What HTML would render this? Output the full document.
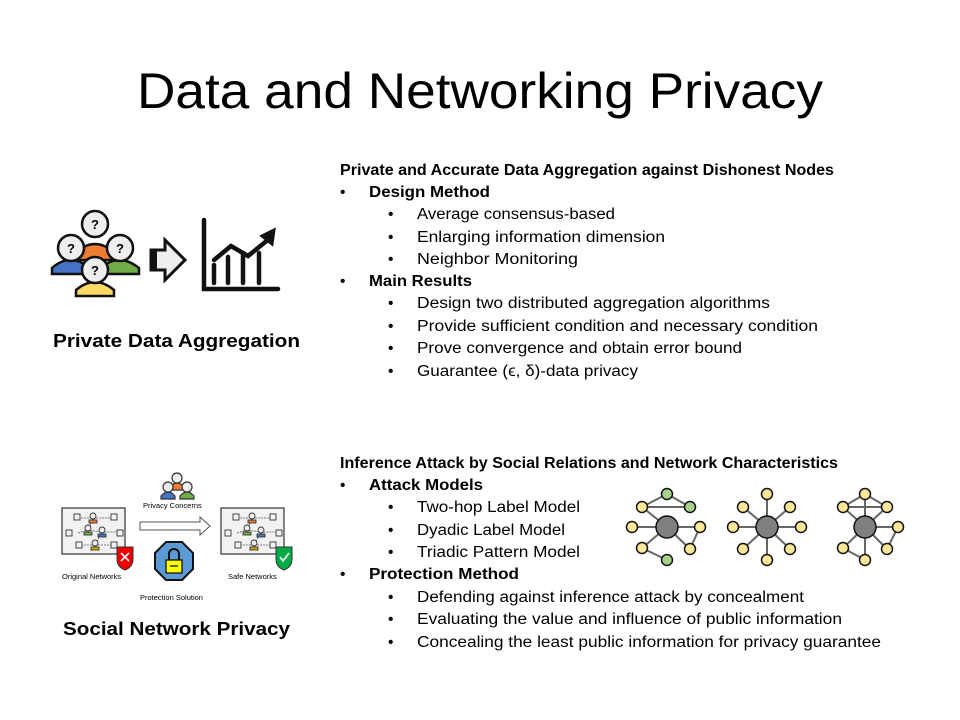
<!DOCTYPE html>
<html><head><meta charset="utf-8"><style>
html,body{margin:0;padding:0;background:#fff;}
svg{display:block}
text{font-family:"Liberation Sans","DejaVu Sans",sans-serif;fill:#000}
.b{font-weight:bold}
</style></head><body>
<svg width="960" height="720" viewBox="0 0 960 720" xmlns="http://www.w3.org/2000/svg">
<text x="137" y="108" font-size="50" textLength="686" lengthAdjust="spacingAndGlyphs">Data and Networking Privacy</text>

<g font-size="15.5">
<text class="b" x="340" y="175" textLength="494" lengthAdjust="spacingAndGlyphs">Private and Accurate Data Aggregation against Dishonest Nodes</text>
<text x="340" y="197">•</text><text class="b" x="369" y="197" textLength="121" lengthAdjust="spacingAndGlyphs">Design Method</text>
<text x="388" y="219">•</text><text x="417" y="219" textLength="198" lengthAdjust="spacingAndGlyphs">Average consensus-based</text>
<text x="388" y="242">•</text><text x="417" y="242" textLength="248" lengthAdjust="spacingAndGlyphs">Enlarging information dimension</text>
<text x="388" y="264">•</text><text x="417" y="264" textLength="161" lengthAdjust="spacingAndGlyphs">Neighbor Monitoring</text>
<text x="340" y="286">•</text><text class="b" x="369" y="286" textLength="103" lengthAdjust="spacingAndGlyphs">Main Results</text>
<text x="388" y="308">•</text><text x="417" y="308" textLength="353" lengthAdjust="spacingAndGlyphs">Design two distributed aggregation algorithms</text>
<text x="388" y="331">•</text><text x="417" y="331" textLength="401" lengthAdjust="spacingAndGlyphs">Provide sufficient condition and  necessary condition</text>
<text x="388" y="353">•</text><text x="417" y="353" textLength="325" lengthAdjust="spacingAndGlyphs">Prove convergence and obtain error bound</text>
<text x="388" y="376">•</text><text x="417" y="376" textLength="221" lengthAdjust="spacingAndGlyphs">Guarantee (ϵ, δ)-data privacy</text>

<text class="b" x="340" y="468" textLength="498" lengthAdjust="spacingAndGlyphs">Inference Attack by Social Relations and Network Characteristics</text>
<text x="340" y="490">•</text><text class="b" x="369" y="490" textLength="114" lengthAdjust="spacingAndGlyphs">Attack Models</text>
<text x="388" y="512">•</text><text x="417" y="512" textLength="163" lengthAdjust="spacingAndGlyphs">Two-hop Label Model</text>
<text x="388" y="535">•</text><text x="417" y="535" textLength="148" lengthAdjust="spacingAndGlyphs">Dyadic Label Model</text>
<text x="388" y="557">•</text><text x="417" y="557" textLength="163" lengthAdjust="spacingAndGlyphs">Triadic Pattern Model</text>
<text x="340" y="579">•</text><text class="b" x="369" y="579" textLength="150" lengthAdjust="spacingAndGlyphs">Protection Method</text>
<text x="388" y="602">•</text><text x="417" y="602" textLength="387" lengthAdjust="spacingAndGlyphs">Defending against inference attack by concealment</text>
<text x="388" y="624">•</text><text x="417" y="624" textLength="425" lengthAdjust="spacingAndGlyphs">Evaluating the value and influence of public information</text>
<text x="388" y="647">•</text><text x="417" y="647" textLength="464" lengthAdjust="spacingAndGlyphs">Concealing the least public information for privacy guarantee</text>
</g>

<text class="b" x="53" y="347" font-size="18" textLength="247" lengthAdjust="spacingAndGlyphs">Private Data Aggregation</text>
<text class="b" x="63" y="635" font-size="18" textLength="227" lengthAdjust="spacingAndGlyphs">Social Network Privacy</text>

<!-- people icon -->
<g stroke="#111" stroke-width="2.5">
<path d="M76 252 q19-16 38 0 v8 h-38z" fill="#ed7d31"/>
<path d="M52 274 v-6 q18-16 38 0 v6z" fill="#4472c4"/>
<path d="M101 274 v-6 q18-16 38 0 v6z" fill="#70ad47"/>
<path d="M76 296 v-6 q19-16 38 0 v6z" fill="#ffd966"/>
<circle cx="95" cy="224" r="13" fill="#eee"/>
<circle cx="71" cy="248" r="13" fill="#eee"/>
<circle cx="120" cy="248" r="13" fill="#eee"/>
<circle cx="95" cy="270" r="13" fill="#eee"/>
</g>
<g font-size="13" font-weight="bold" text-anchor="middle">
<text x="95" y="229">?</text><text x="71" y="253">?</text><text x="120" y="253">?</text><text x="95" y="275">?</text>
</g>
<!-- arrow -->
<path d="M151 250 h14 v-10 l20 20 -20 20 v-10 h-14z" fill="#eee" stroke="#111" stroke-width="3"/>
<rect x="151" y="250" width="6" height="20" fill="#111"/>
<!-- chart -->
<g stroke="#111" stroke-width="4.5" fill="none" stroke-linecap="round">
<path d="M204 220 v69 h74"/>
<path d="M214 283 v-18 M228 283 v-26 M243 283 v-30 M259 283 v-30"/>
<path d="M214 260 l17 -14 l17 10 l21 -17"/>
</g>
<path d="M262 236 l12 -6 l-2 14 z" fill="#111" stroke="#111" stroke-width="3"/>

<!-- social network figure -->
<g font-size="7.5" fill="#222">
<text x="143" y="508">Privacy Concerns</text>
<text x="62" y="579">Original Networks</text>
<text x="228" y="579">Safe Networks</text>
<text x="140" y="600">Protection Solution</text>
</g>
<g stroke="#333" stroke-width="1.2">
<path d="M170 490 v-3 q7-8 14 0 v3z" fill="#ed7d31"/>
<circle cx="177" cy="478" r="5" fill="#eee"/>
<path d="M161 499 v-3 q7-8 14 0 v3z" fill="#4472c4"/>
<path d="M180 499 v-3 q7-8 14 0 v3z" fill="#70ad47"/>
<circle cx="168" cy="487" r="5" fill="#eee"/>
<circle cx="187" cy="487" r="5" fill="#eee"/>
<rect x="62" y="508" width="63" height="46" fill="#f2f2f2" stroke="#333"/>
<rect x="221" y="508" width="63" height="46" fill="#f2f2f2" stroke="#333"/>
</g>
<g stroke="#555" stroke-width="0.8" stroke-dasharray="2,1" fill="none">
<path d="M78 518 L93 518 L114 518 M78 533 L88 530 L102 532 L120 532 M93 518 L88 530 M102 532 L95 545 L80 545 M95 545 L114 545"/>
<path d="M237 518 L252 518 L273 518 M237 533 L247 530 L261 532 L279 532 M252 518 L247 530 M261 532 L254 545 L239 545 M254 545 L273 545"/>
</g>
<g fill="#f2f2f2" stroke="#333" stroke-width="0.9">
<rect x="74" y="514" width="6" height="6"/><rect x="111" y="514" width="6" height="6"/><rect x="66" y="530" width="6" height="6"/><rect x="117" y="530" width="6" height="6"/><rect x="76" y="542" width="6" height="6"/><rect x="111" y="542" width="6" height="6"/>
<rect x="233" y="514" width="6" height="6"/><rect x="270" y="514" width="6" height="6"/><rect x="225" y="530" width="6" height="6"/><rect x="276" y="530" width="6" height="6"/><rect x="235" y="542" width="6" height="6"/><rect x="270" y="542" width="6" height="6"/>
</g>
<g stroke="#333" stroke-width="0.9">
<rect x="89" y="520" width="8" height="3" fill="#ed7d31"/><circle cx="93" cy="516" r="3" fill="#eee"/>
<rect x="84" y="532" width="8" height="3" fill="#70ad47"/><circle cx="88" cy="528" r="3" fill="#eee"/>
<rect x="98" y="534" width="8" height="3" fill="#4472c4"/><circle cx="102" cy="530" r="3" fill="#eee"/>
<rect x="91" y="547" width="8" height="3" fill="#d4a900"/><circle cx="95" cy="543" r="3" fill="#eee"/>
<rect x="248" y="520" width="8" height="3" fill="#ed7d31"/><circle cx="252" cy="516" r="3" fill="#eee"/>
<rect x="243" y="532" width="8" height="3" fill="#70ad47"/><circle cx="247" cy="528" r="3" fill="#eee"/>
<rect x="257" y="534" width="8" height="3" fill="#4472c4"/><circle cx="261" cy="530" r="3" fill="#eee"/>
<rect x="250" y="547" width="8" height="3" fill="#d4a900"/><circle cx="254" cy="543" r="3" fill="#eee"/>
</g>
<path d="M117 547 h16 v12 q0 8 -8 11 q-8 -3 -8 -11z" fill="#e00" stroke="#333" stroke-width="1"/>
<path d="M121 553 l8 8 M129 553 l-8 8" stroke="#fff" stroke-width="1.6"/>
<path d="M276 547 h16 v12 q0 8 -8 11 q-8 -3 -8 -11z" fill="#0a4" stroke="#333" stroke-width="1"/>
<path d="M280 557 l3 4 l6 -8" stroke="#fff" stroke-width="1.6" fill="none"/>
<path d="M140 522 h60 v-5 l10 9 -10 9 v-5 h-60z" fill="#fff" stroke="#555" stroke-width="1"/>
<polygon points="166,542 182,542 193,553 193,569 182,580 166,580 155,569 155,553" fill="#5b9bd5" stroke="#111" stroke-width="2"/>
<path d="M169 560 v-6 a5 5 0 0 1 10 0 v6" fill="none" stroke="#111" stroke-width="2"/>
<rect x="166" y="560" width="16" height="13" fill="#ff0" stroke="#111" stroke-width="1.3"/>
<path d="M170 566 h8" stroke="#111" stroke-width="1.3"/>

<!-- graphs -->
<g stroke="#666" stroke-width="2" fill="none">
<path d="M667 527 L642 507 M667 527 L632 527 M667 527 L700 527 M667 527 L642 548 M667 527 L690 549 M642 507 L690 507 M642 507 L667 494 M667 494 L690 507 M700 527 L690 549 M642 548 L667 560"/>
<path d="M767 527 L767 494 M767 527 L743 507 M767 527 L790 507 M767 527 L733 527 M767 527 L801 527 M767 527 L743 549 M767 527 L790 549 M767 527 L767 560"/>
<path d="M865 527 L865 494 M865 527 L843 507 M865 527 L887 507 M865 527 L898 527 M865 527 L887 549 M865 527 L843 548 M865 527 L865 560 M843 507 L865 494 M865 494 L887 507 M843 507 L887 507 M898 527 L887 549 M843 548 L865 560"/>
</g>
<g stroke="#111" stroke-width="1.5" fill="#ffe699">
<circle cx="667" cy="527" r="11" fill="#808080"/><circle cx="767" cy="527" r="11" fill="#808080"/><circle cx="865" cy="527" r="11" fill="#808080"/>
<circle cx="642" cy="507" r="5.5"/><circle cx="667" cy="494" r="5.5" fill="#a9d18e"/><circle cx="690" cy="507" r="5.5" fill="#a9d18e"/><circle cx="632" cy="527" r="5.5"/><circle cx="700" cy="527" r="5.5"/><circle cx="642" cy="548" r="5.5"/><circle cx="667" cy="560" r="5.5" fill="#a9d18e"/><circle cx="690" cy="549" r="5.5"/>
<circle cx="767" cy="494" r="5.5"/><circle cx="743" cy="507" r="5.5"/><circle cx="790" cy="507" r="5.5"/><circle cx="733" cy="527" r="5.5"/><circle cx="801" cy="527" r="5.5"/><circle cx="743" cy="549" r="5.5"/><circle cx="790" cy="549" r="5.5"/><circle cx="767" cy="560" r="5.5"/>
<circle cx="865" cy="494" r="5.5"/><circle cx="843" cy="507" r="5.5"/><circle cx="887" cy="507" r="5.5"/><circle cx="898" cy="527" r="5.5"/><circle cx="887" cy="549" r="5.5"/><circle cx="843" cy="548" r="5.5"/><circle cx="865" cy="560" r="5.5"/>
</g>
</svg>
</body></html>
